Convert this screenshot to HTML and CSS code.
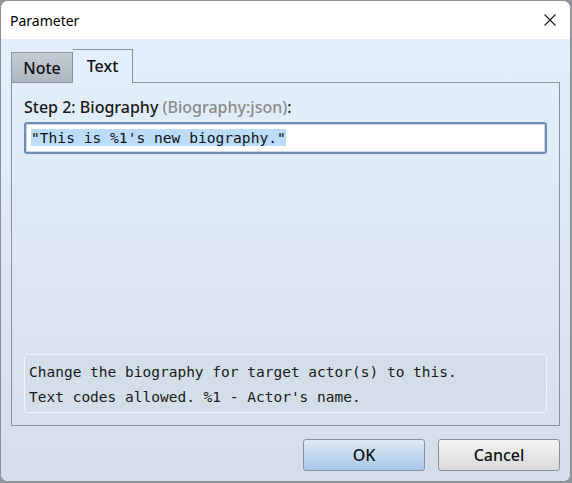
FILE: index.html
```html
<!DOCTYPE html>
<html lang="en">
<head>
<meta charset="utf-8">
<title>Parameter</title>
<link rel="stylesheet" href="styles.css">
</head>
<body>
<div class="window">
  <div class="titlebar">
    <span class="title">Parameter</span>
    <button class="close" aria-label="Close">
      <svg width="12" height="12" viewBox="0 0 12 12"><path d="M0.5 0.5 L11.5 11.5 M11.5 0.5 L0.5 11.5" stroke="#1a1a1a" stroke-width="1.1" fill="none"/></svg>
    </button>
  </div>
  <div class="client">
    <div class="tabs">
      <div class="tab">Note</div>
      <div class="tab active">Text</div>
    </div>
    <div class="panel">
      <label class="field-label" for="value">Step 2: Biography <span class="type">(Biography:json)</span>:</label>
      <div class="input" id="value"><span class="sel">"This is %1's new biography."</span></div>
      <div class="spacer"></div>
      <div class="help">
        <div>Change the biography for target actor(s) to this.</div>
        <div>Text codes allowed. %1 - Actor's name.</div>
      </div>
    </div>
    <div class="actions">
      <button class="btn primary">OK</button>
      <button class="btn">Cancel</button>
    </div>
  </div>
</div>
</body>
</html>
```

FILE: styles.css
```css
html, body {
  margin: 0;
  padding: 0;
}

body {
  width: 572px;
  height: 483px;
  background: #8f959c;
  font-family: "Noto Sans", "Open Sans", sans-serif;
  overflow: hidden;
}

.window {
  box-sizing: border-box;
  width: 571px;
  height: 482px;
  border: 1px solid #8b9197;
  border-radius: 8px;
  overflow: hidden;
  display: flex;
  flex-direction: column;
  background: #ffffff;
}

.titlebar {
  height: 38px;
  flex: none;
  display: flex;
  align-items: center;
  justify-content: space-between;
  padding: 0 14px 0 9px;
  background: #ffffff;
}

.title {
  font-size: 14px;
  color: #000;
}

.close {
  border: 0;
  background: transparent;
  padding: 0;
  width: 12px;
  height: 12px;
  display: flex;
}

.client {
  flex: 1;
  display: flex;
  flex-direction: column;
  padding: 11px 10px 10px 10px;
  background: linear-gradient(to bottom, #e3effc 0%, #dde8f4 50%, #d3dee9 100%);
}

.tabs {
  display: flex;
  align-items: flex-end;
  height: 33px;
  position: relative;
  z-index: 1;
  margin-bottom: -1px;
}

.tab {
  box-sizing: border-box;
  width: 62px;
  height: 31px;
  display: flex;
  align-items: center;
  justify-content: center;
  font-size: 16px;
  font-weight: 500;
  color: #111;
  border: 1px solid #8c939a;
  border-bottom: 1px solid #8c939a;
  background: linear-gradient(to bottom, #c4ccd5, #aeb6bf);
}

.tab.active {
  width: 60px;
  height: 34px;
  border-left: 0;
  border-bottom: 0;
  padding-bottom: 1px;
  background: #e3effc;
}

.panel {
  box-sizing: border-box;
  height: 344px;
  flex: none;
  display: flex;
  flex-direction: column;
  border: 1px solid #8c939a;
  padding: 13px 12px 12px 12px;
}

.field-label {
  font-size: 16px;
  line-height: 22px;
  font-weight: 500;
  color: #1a1a1a;
}

.field-label .type {
  color: #8a8a8a;
}

.input {
  box-sizing: border-box;
  height: 32px;
  margin-top: 4px;
  border: 2px solid #6d8db3;
  border-radius: 3px;
  background: #ffffff;
  padding: 4px 5px;
  font-family: "DejaVu Sans Mono", "Liberation Mono", monospace;
  font-size: 14.6px;
  line-height: 20px;
  color: #111;
  box-shadow: inset 0 0 0 1px #c9d7e8;
}

.input .sel {
  background: #bcdcfb;
}

.spacer {
  flex: 1;
}

.help {
  box-sizing: border-box;
  height: 59px;
  border: 1px solid #f0f5fb;
  border-radius: 4px;
  background: #d3dee9;
  padding: 5px 4px;
  font-family: "DejaVu Sans Mono", "Liberation Mono", monospace;
  font-size: 14.5px;
  line-height: 25px;
  color: #1a1a1a;
}

.actions {
  flex: 1;
  display: flex;
  justify-content: flex-end;
  align-items: flex-end;
  gap: 13px;
}

.btn {
  box-sizing: border-box;
  width: 122px;
  height: 32px;
  border: 1px solid #8d9196;
  border-radius: 3px;
  font-family: "Noto Sans", "Open Sans", sans-serif;
  font-size: 16px;
  font-weight: 500;
  color: #111;
  background: linear-gradient(to bottom, #f4f4f4, #dadada);
}

.btn.primary {
  border-color: #8b939c;
  background: linear-gradient(to bottom, #dde9f7, #aac8e8);
}
```
